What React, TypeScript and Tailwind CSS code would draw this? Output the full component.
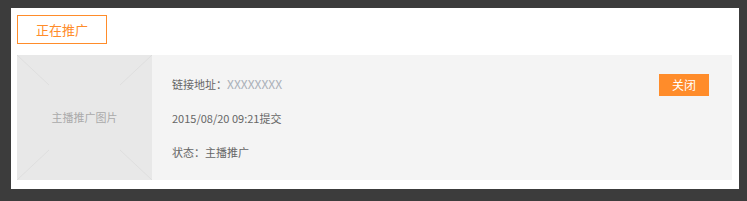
export default function App() {
  return (
    <div
      className="h-[201px] w-[747px] bg-[#3c3c3c] pt-[8px] pl-[11px]"
      style={{ fontFamily: '"Noto Sans CJK SC", sans-serif' }}
    >
      <div className="flex h-[181px] w-[728px] flex-col bg-white pt-[7px] pl-[6px] pr-[7px]">
        <button className="flex h-[29px] w-[90px] items-center justify-center border border-[#ff8c2a] text-[13px] text-[#ff8c2a]">
          正在推广
        </button>

        <div className="mt-[11px] flex h-[125px] bg-[#f4f4f4]">
          <div className="relative flex h-full w-[135px] shrink-0 items-center justify-center bg-[#e8e8e8]">
            <svg className="absolute inset-0" width="135" height="125" viewBox="0 0 135 125">
              <line x1="0" y1="0" x2="32" y2="30" stroke="#dedede" strokeWidth="1" />
              <line x1="135" y1="0" x2="103" y2="30" stroke="#dedede" strokeWidth="1" />
              <line x1="0" y1="125" x2="32" y2="95" stroke="#dedede" strokeWidth="1" />
              <line x1="135" y1="125" x2="103" y2="95" stroke="#dedede" strokeWidth="1" />
            </svg>
            <span className="relative text-[11px] text-[#aaaaaa]">主播推广图片</span>
          </div>

          <div className="flex flex-1 justify-between pl-[20px] pr-[23px]">
            <div className="flex flex-col pt-[12px] text-[11px] text-[#666666]">
              <div className="flex h-[34px] items-center">
                链接地址：<span className="text-[12px] text-[#aab0b8]">XXXXXXXX</span>
              </div>
              <div className="flex h-[34px] items-center">2015/08/20 09:21提交</div>
              <div className="flex h-[34px] items-center">状态：主播推广</div>
            </div>
            <div className="pt-[19px]">
              <button className="flex h-[22px] w-[50px] items-center justify-center bg-[#ff8c2a] text-[12px] text-white">
                关闭
              </button>
            </div>
          </div>
        </div>
      </div>
    </div>
  )
}
